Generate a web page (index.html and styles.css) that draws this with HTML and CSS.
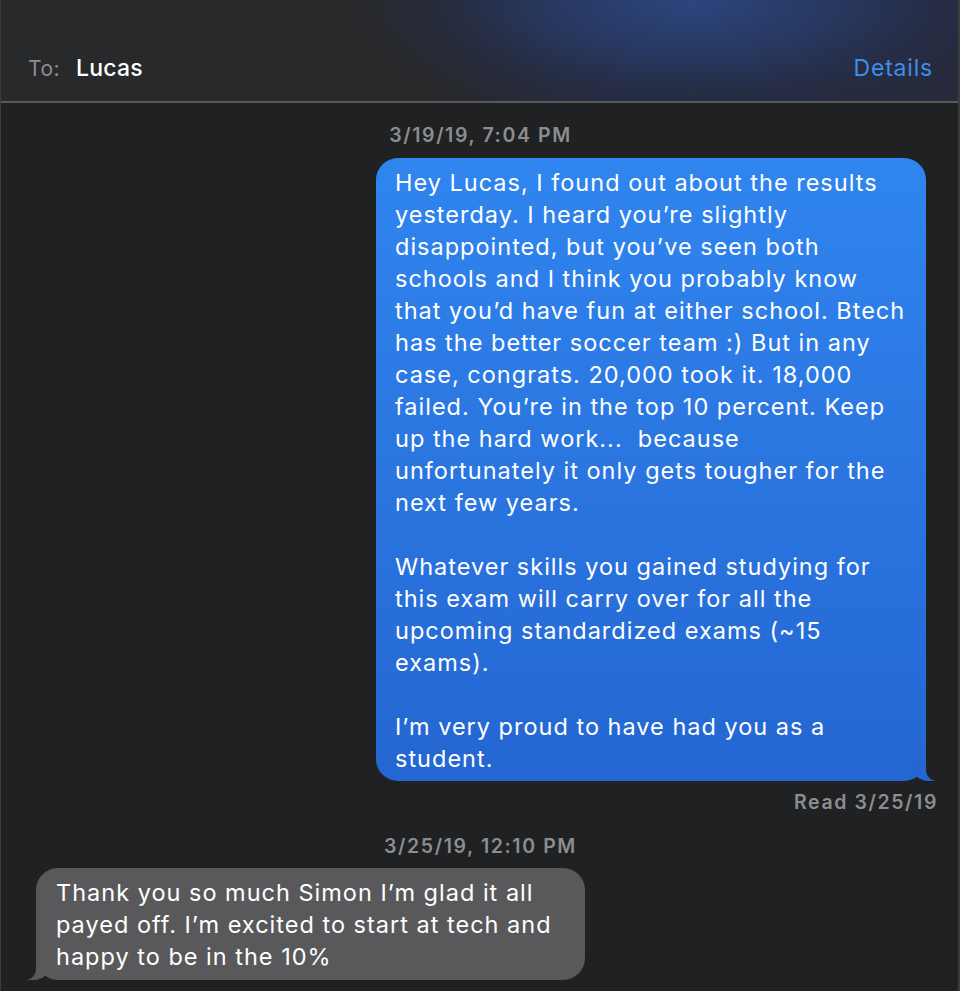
FILE: index.html
```html
<!DOCTYPE html>
<html>
<head>
<meta charset="utf-8">
<link rel="stylesheet" href="styles.css">
</head>
<body>
<div class="screen">
  <header class="header">
    <div class="to"><span class="to-label">To:</span><span class="to-name">Lucas</span></div>
    <div class="details">Details</div>
  </header>
  <main class="thread">
    <div class="stamp">3/19/19, 7:04 PM</div>
    <div class="row out">
      <div class="bubble blue">Hey Lucas, I found out about the results<br>yesterday. I heard you’re slightly<br>disappointed, but you’ve seen both<br>schools and I think you probably know<br>that you’d have fun at either school. Btech<br>has the better soccer team :) But in any<br>case, congrats. 20,000 took it. 18,000<br>failed. You’re in the top 10 percent. Keep<br>up the hard work...&nbsp; because<br>unfortunately it only gets tougher for the<br>next few years.<br><br>Whatever skills you gained studying for<br>this exam will carry over for all the<br>upcoming standardized exams (~15<br>exams).<br><br>I’m very proud to have had you as a<br>student.</div>
    </div>
    <div class="read">Read 3/25/19</div>
    <div class="stamp stamp2">3/25/19, 12:10 PM</div>
    <div class="row in">
      <div class="bubble gray">Thank you so much Simon I’m glad it all<br>payed off. I’m excited to start at tech and<br>happy to be in the 10%</div>
    </div>
  </main>
</div>
</body>
</html>
```
FILE: styles.css
```css
html, body {
  margin: 0;
  padding: 0;
  background: #1f2123;
}
body {
  font-family: Inter, "Noto Sans", sans-serif;
  -webkit-font-smoothing: antialiased;
}
.screen {
  width: 960px;
  height: 991px;
  overflow: hidden;
  box-sizing: border-box;
  border-left: 1px solid #3a3c3e;
  border-right: 2px solid #3a3c3e;
  background: #1f2123;
  display: flex;
  flex-direction: column;
}
.header {
  height: 103px;
  flex: none;
  box-sizing: border-box;
  border-bottom: 2px solid #58595b;
  background:
    radial-gradient(ellipse 340px 130px at 690px 0px, rgba(44,72,130,0.95) 0%, rgba(40,60,108,0.8) 40%, rgba(38,46,75,0.5) 75%, rgba(40,40,42,0) 100%),
    linear-gradient(90deg, #28292b 0%, #28292b 45%, #262a38 62%, #262a3b 100%);
  display: flex;
  align-items: flex-end;
  justify-content: space-between;
  padding: 0 25px 19px 27px;
}
.to {
  display: flex;
  align-items: baseline;
  gap: 16px;
}
.to-label {
  color: #8d8e92;
  font-size: 21px;
  letter-spacing: 0.5px;
}
.to-name {
  color: #ffffff;
  font-size: 23px;
  font-weight: 500;
  letter-spacing: 0.2px;
}
.details {
  color: #3f8ee8;
  font-size: 23px;
  letter-spacing: 0.8px;
}
.thread {
  display: flex;
  flex-direction: column;
  padding: 18px 0 0 0;
}
.stamp {
  text-align: center;
  color: #8c8d91;
  font-size: 19.5px;
  font-weight: 600;
  letter-spacing: 1.6px;
  line-height: 28px;
  padding-left: 2px;
  margin-bottom: 9px;
}
.stamp2 {
  margin-bottom: 8px;
}
.row {
  display: flex;
}
.row.out {
  justify-content: flex-end;
  padding-right: 32px;
}
.row.in {
  justify-content: flex-start;
  padding-left: 35px;
}
.bubble {
  position: relative;
  color: #fff;
  font-size: 23.5px;
  letter-spacing: 1px;
  line-height: 32px;
  border-radius: 22px;
  white-space: nowrap;
  box-sizing: border-box;
}
.bubble.blue {
  width: 550px;
  padding: 9px 18px 6px 19px;
  background: linear-gradient(180deg, #3085ef 0%, #2a74df 55%, #2466d2 100%);
}
.bubble.gray {
  width: 549px;
  padding: 9px 19px 7px 20px;
  background: #59595b;
}
.bubble::before,
.bubble::after {
  content: "";
  position: absolute;
  bottom: 0;
  height: 22px;
}
.bubble.blue::before {
  right: -9px;
  width: 24px;
  background: #2466d2;
  border-bottom-left-radius: 18px 16px;
}
.bubble.blue::after {
  right: -26px;
  width: 26px;
  background: #1f2123;
  border-bottom-left-radius: 11px;
}
.bubble.gray::before {
  left: -9px;
  width: 24px;
  background: #59595b;
  border-bottom-right-radius: 18px 16px;
}
.bubble.gray::after {
  left: -26px;
  width: 26px;
  background: #1f2123;
  border-bottom-right-radius: 11px;
}
.read {
  text-align: right;
  color: #8c8d91;
  font-size: 19.5px;
  font-weight: 600;
  letter-spacing: 1.6px;
  line-height: 28px;
  padding-right: 20px;
  margin-top: 7px;
  margin-bottom: 16px;
}
```
